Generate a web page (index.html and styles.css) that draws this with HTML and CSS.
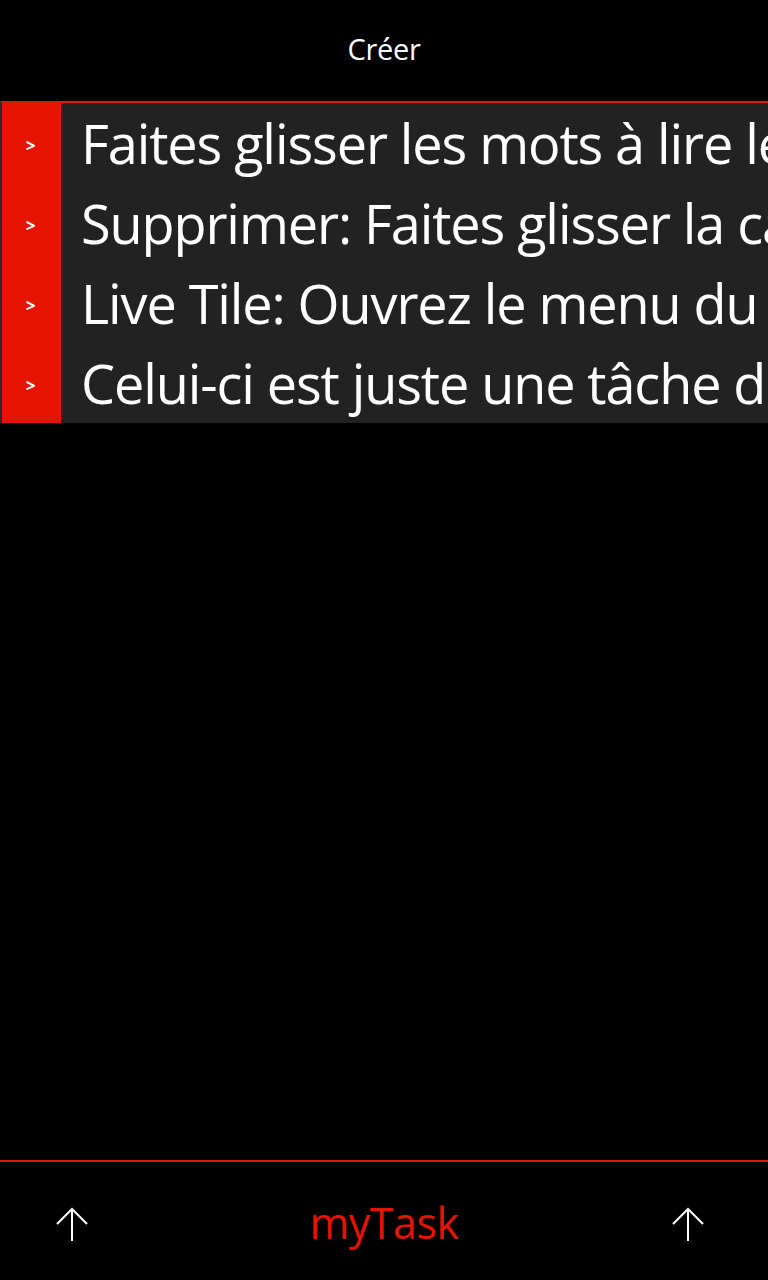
FILE: index.html
```html
<!DOCTYPE html>
<html lang="fr">
<head>
<meta charset="utf-8">
<title>myTask</title>
<link rel="stylesheet" href="styles.css">
</head>
<body>
<div class="screen">
  <header class="title">Créer</header>
  <ul class="tasks">
    <li class="task"><span class="handle">&gt;</span><span class="text">Faites glisser les mots à lire les détails</span></li>
    <li class="task"><span class="handle">&gt;</span><span class="text">Supprimer: Faites glisser la case vers la gauche</span></li>
    <li class="task"><span class="handle">&gt;</span><span class="text">Live Tile: Ouvrez le menu du bas</span></li>
    <li class="task"><span class="handle">&gt;</span><span class="text">Celui-ci est juste une tâche de démonstration</span></li>
  </ul>
  <div class="spacer"></div>
  <footer class="appbar">
    <button class="icon-btn left" aria-label="Haut">
      <svg width="34" height="34" viewBox="0 0 34 34"><path d="M17 2 V34 M2 17 L17 2 L32 17" fill="none" stroke="#fff" stroke-width="2"/></svg>
    </button>
    <div class="brand">myTask</div>
    <button class="icon-btn right" aria-label="Haut">
      <svg width="34" height="34" viewBox="0 0 34 34"><path d="M17 2 V34 M2 17 L17 2 L32 17" fill="none" stroke="#fff" stroke-width="2"/></svg>
    </button>
  </footer>
</div>
</body>
</html>
```
FILE: styles.css
```css
html, body {
  margin: 0;
  padding: 0;
  background: #000;
}
body {
  font-family: "Open Sans", "Noto Sans", sans-serif;
  color: #fff;
}
.screen {
  width: 768px;
  height: 1280px;
  display: flex;
  flex-direction: column;
  overflow: hidden;
}
.title {
  height: 101px;
  box-sizing: border-box;
  padding-top: 30px;
  text-align: center;
  font-size: 29px;
  line-height: 38px;
  letter-spacing: -0.3px;
}
.tasks {
  list-style: none;
  margin: 0;
  padding: 0;
  border-top: 2px solid #e51400;
  border-left: 2px solid #2a2a2a;
}
.task {
  display: flex;
  height: 80px;
  background: #222;
  overflow: hidden;
}
.handle {
  flex: 0 0 59px;
  background: #e51400;
  color: #fff;
  font-size: 17px;
  font-weight: 700;
  line-height: 80px;
  text-align: center;
  padding: 3px 2px 0 0;
  box-sizing: border-box;
}
.text {
  white-space: nowrap;
  padding-left: 20px;
  font-size: 54px;
  line-height: 80px;
  letter-spacing: -1.1px;
}
.spacer {
  flex: 1;
}
.appbar {
  height: 118px;
  border-top: 2px solid #e51400;
  display: grid;
  grid-template-columns: 1fr auto 1fr;
  align-items: center;
}
.icon-btn {
  background: none;
  border: 0;
  padding: 0;
  width: 34px;
  height: 34px;
  display: flex;
  margin-top: 6px;
}
.icon-btn.left {
  justify-self: start;
  margin-left: 55px;
}
.icon-btn.right {
  justify-self: end;
  margin-right: 63px;
}
.brand {
  color: #e51400;
  font-size: 43px;
  line-height: 50px;
  margin-top: 4px;
  letter-spacing: -0.5px;
}
```
